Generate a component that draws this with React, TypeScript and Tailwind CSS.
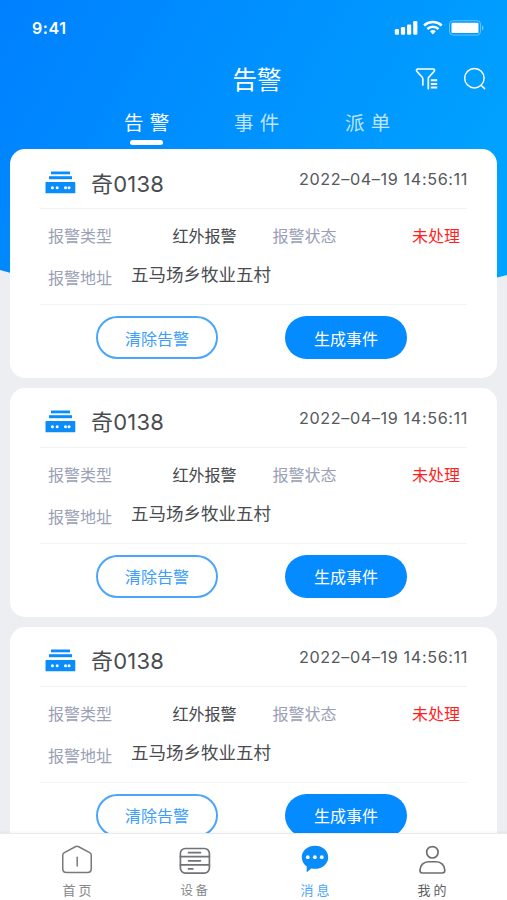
import React from 'react';

interface Alarm {
  id: number;
  device: string;
  time: string;
  type: string;
  status: string;
  address: string;
}

const ALARMS: Alarm[] = [1, 2, 3].map((id) => ({
  id,
  device: '奇0138',
  time: '2022–04–19 14:56:11',
  type: '红外报警',
  status: '未处理',
  address: '五马场乡牧业五村',
}));

const StatusBar: React.FC = () => (
  <div className="flex h-[56px] items-center justify-between pl-[32px] pr-[23px]">
    <span className="font-['Inter','Noto_Sans_CJK_SC',sans-serif] text-[16px] font-semibold tracking-[0.6px]">9:41</span>
    <svg width="90" height="16" viewBox="0 0 90 16" fill="currentColor">
      {/* Signal */}
      <rect x="0.8" y="9" width="4.2" height="5.7" rx="1.2" />
      <rect x="6.9" y="7" width="4.2" height="7.7" rx="1.2" />
      <rect x="13" y="4.5" width="4.2" height="10.2" rx="1.2" />
      <rect x="19.2" y="1" width="4.2" height="13.7" rx="1.2" />
      {/* Wifi */}
      <g fill="none" stroke="currentColor" strokeWidth="2.5">
        <path d="M30.1 5.5a13 13 0 0 1 17.6 0" />
        <path d="M33.3 9a8.3 8.3 0 0 1 11.2 0" />
      </g>
      <path d="M36 11.3a4.4 4.4 0 0 1 5.8 0L38.9 14.4z" />
      {/* Battery */}
      <rect x="55.5" y="0.7" width="31" height="14.4" rx="3.5" fill="none" stroke="currentColor" strokeOpacity="0.4" />
      <rect x="57.5" y="2.7" width="27" height="10.4" rx="1.2" />
      <path d="M88 5.5c1.8.6 1.8 4.2 0 4.8z" opacity="0.5" />
    </svg>
  </div>
);

const FilterIcon: React.FC = () => (
  <svg width="24" height="24" viewBox="0 0 24 24" fill="none" stroke="currentColor" strokeWidth="1.7" strokeLinecap="round" strokeLinejoin="round">
    <path d="M7.8 18V11.8Q7.8 11 7.2 10.3L2 4.5C1 3.2 1.5 2 3 2h15c1.5 0 2 1.2 1 2.5L14 10q-.7.8-.7 1.8V21.7" />
    <path d="M15.8 13.2h6.4M15.8 16.9h6.4M15.8 20.6h6.4" strokeLinecap="butt" strokeWidth="2" />
  </svg>
);

const SearchIcon: React.FC = () => (
  <svg width="24" height="24" viewBox="0 0 24 24" fill="none" stroke="currentColor" strokeWidth="1.5" strokeLinecap="round">
    <circle cx="11.4" cy="11.2" r="9.7" />
    <path d="M18.3 18.5l3.3 3.1" />
  </svg>
);

const DeviceIcon: React.FC = () => (
  <svg width="31" height="23" viewBox="0 0 31 23" fill="#0a8dfb">
    <rect x="6" y="0.5" width="19" height="2.8" />
    <rect x="4" y="5.2" width="23" height="3" />
    <path d="M1.2 11h28.4a.7.7 0 0 1 .7.7v10.5H.5V11.7a.7.7 0 0 1 .7-.7z" />
    <g fill="#fff">
      <circle cx="7.4" cy="16.8" r="1.5" />
      <circle cx="12.2" cy="16.8" r="1.5" />
      <circle cx="20.5" cy="16.8" r="1.5" />
      <circle cx="24" cy="16.8" r="1.5" />
    </g>
  </svg>
);

const HomeIcon: React.FC = () => (
  <svg width="34" height="32" viewBox="0 0 34 32" fill="none" stroke="#77797c" strokeWidth="1.6" strokeLinecap="round" strokeLinejoin="round">
    <path d="M15.2 1.9 3.5 8.1Q1.8 9 1.8 11v14.4q0 4 4 4h22.4q4 0 4-4V11q0-2-1.7-2.9L18.8 1.9q-1.8-.9-3.6 0z" />
    <path d="M17.2 13v9.5" />
  </svg>
);

const ServerIcon: React.FC = () => (
  <svg width="34" height="32" viewBox="0 0 34 32" fill="none" stroke="#717376" strokeWidth="1.7" strokeLinecap="round">
    <rect x="2.4" y="3.5" width="29" height="24.6" rx="5" />
    <path d="M2.4 11.7h29M2.4 19.9h29M10.5 7.7h12M10.5 15.8h12M10.5 23.9h4.3" />
  </svg>
);

const ChatIcon: React.FC = () => (
  <svg width="34" height="32" viewBox="0 0 34 32" fill="#0a8dfb">
    <path d="M17 1.9c8 0 14.1 5.2 14.1 12.2S25 26.5 17 26.5c-1.3 0-2.8-.1-4-.3L8.6 29.9c-.3.2-.6 0-.5-.4l.1-5.5C5 21.8 2.9 18.3 2.9 14.1 2.9 7.1 9 1.9 17 1.9z" />
    <g fill="#fff">
      <circle cx="9.3" cy="14" r="2" />
      <circle cx="16.8" cy="14" r="2" />
      <circle cx="24.2" cy="14" r="2" />
    </g>
  </svg>
);

const UserIcon: React.FC = () => (
  <svg width="34" height="32" viewBox="0 0 34 32" fill="none" stroke="#6c6e72" strokeWidth="1.8">
    <circle cx="17.4" cy="8.8" r="6.1" />
    <path d="M4.2 28.3v-.7c0-4.8 4-8.7 9-8.7h8.4c5 0 9 3.9 9 8.7v.7q0 2.600-2.500 2.600H6.7q-2.500 0-2.500-2.600z" />
  </svg>
);

const AlarmCard: React.FC<{ alarm: Alarm }> = ({ alarm }) => (
  <section className="flex h-[229px] shrink-0 flex-col rounded-[15px] bg-white px-[30px] text-[16px] leading-6">
    <div className="flex h-[60px] items-center justify-between border-b border-[#f1f2f4] pl-[5px] pt-[8px]">
      <div className="flex items-center gap-[15px] font-['Inter','Noto_Sans_CJK_SC',sans-serif] text-[22px] tracking-[0.2px] text-[#4a4c50]">
        <DeviceIcon />
        <span className="pt-[2px]">{alarm.device}</span>
      </div>
      <time className="-mr-[1px] -mt-[7px] font-['Inter','Noto_Sans_CJK_SC',sans-serif] text-[16.2px] tracking-[0.62px] whitespace-nowrap text-[#56585d]">{alarm.time}</time>
    </div>

    <dl className="flex h-[96px] flex-col border-b border-[#f3f4f6] pl-[8px] pt-[14px]">
      <div className="flex">
        <dt className="w-[124.5px] text-[#9aa0b6]">报警类型</dt>
        <dd className="w-[100px] text-[#45474b]">{alarm.type}</dd>
        <dt className="w-[139.5px] text-[#9aa0b6]">报警状态</dt>
        <dd className="text-[#ff1f1f]">{alarm.status}</dd>
      </div>
      <div className="mt-[15px] flex">
        <dt className="w-[83px] pt-[3px] text-[#9aa0b6]">报警地址</dt>
        <dd className="text-[17.5px] text-[#4a4c50]">{alarm.address}</dd>
      </div>
    </dl>

    <div className="flex justify-between pl-[56px] pr-[60px] pt-[11px]">
      <button className="h-[43px] w-[122px] rounded-full border-2 border-[#4aa6fa] text-[#3a9efa]">清除告警</button>
      <button className="h-[43px] w-[122px] rounded-full bg-[#048bff] text-white">生成事件</button>
    </div>
  </section>
);

export default function App() {
  return (
    <div className="relative isolate flex h-[900px] w-[507px] flex-col overflow-hidden bg-[#edeef1] font-['Noto_Sans_CJK_SC',sans-serif]">
      {/* Curved blue backdrop */}
      <svg className="absolute top-0 left-0 -z-10" width="507" height="330" viewBox="0 0 507 330">
        <defs>
          <linearGradient id="sky" gradientUnits="userSpaceOnUse" x1="0" y1="0" x2="460" y2="260">
            <stop offset="0" stopColor="#0080ff" />
            <stop offset="1" stopColor="#00a3ff" />
          </linearGradient>
        </defs>
        <path d="M0 0H507V275Q253 345 0 270z" fill="url(#sky)" />
      </svg>

      <header className="h-[149px] shrink-0 text-white">
        <StatusBar />
        <div className="grid h-[46px] grid-cols-[1fr_auto_1fr] items-center pl-[27px] pr-[20px]">
          <h1 className="col-start-2 text-[24.5px] leading-9">告警</h1>
          <div className="flex justify-end gap-[24px]">
            <FilterIcon />
            <SearchIcon />
          </div>
        </div>
        <nav className="flex gap-[58px] pl-[124px] pt-[1px] text-[19.5px] leading-[37px] tracking-[6.3px]">
          <a className="flex w-[52px] flex-col">
            告警
            <span className="ml-[6px] h-[4.5px] w-[33px] rounded-full bg-white" />
          </a>
          <a className="w-[53px] text-white/75">事件</a>
          <a className="w-[52px] text-white/75">派单</a>
        </nav>
      </header>

      <main className="flex min-h-0 flex-1 flex-col gap-[9.75px] overflow-hidden px-[10px]">
        {ALARMS.map((alarm) => (
          <AlarmCard key={alarm.id} alarm={alarm} />
        ))}
      </main>

      <footer className="flex h-[67px] shrink-0 border-t border-[#e9eaec] bg-white pl-[18px] pr-[16px] text-[13px] leading-5 tracking-[3px] shadow-[0_-1px_2px_rgba(0,0,0,0.04)]">
        <a className="flex w-[118px] flex-col items-center pt-[11px] text-[#85878a]">
          <HomeIcon />
          <span className="mt-[5px] pl-[3px]">首页</span>
        </a>
        <a className="flex w-[118px] flex-col items-center pt-[11px] text-[12.5px] text-[#85878a]">
          <ServerIcon />
          <span className="mt-[3px] pl-[1px] tracking-[2.5px]">设备</span>
        </a>
        <a className="flex w-[122px] flex-col items-center pt-[10px] text-[#4aa6fa]">
          <ChatIcon />
          <span className="mt-[6px] pl-[3px]">消息</span>
        </a>
        <a className="flex w-[112px] flex-col items-center pt-[10px] text-[#5c5e62]">
          <UserIcon />
          <span className="mt-[6px] pl-[3px]">我的</span>
        </a>
      </footer>
    </div>
  );
}
